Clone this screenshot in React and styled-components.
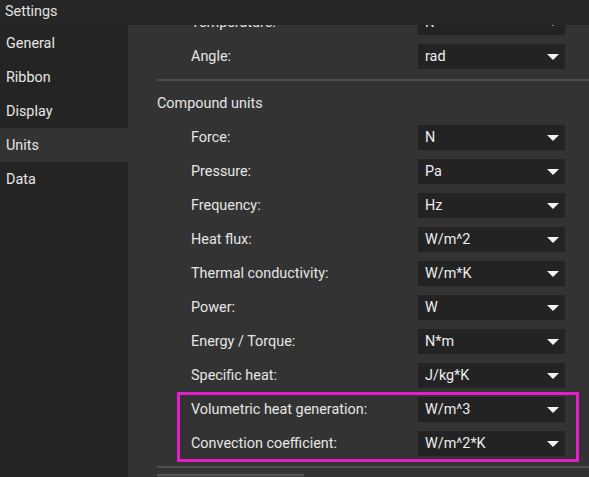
import React from 'react';
import styled, { createGlobalStyle } from 'styled-components';

const GlobalStyle = createGlobalStyle`
    html, body {
        margin:0;
        padding:0;
        background:#333333;
        overflow:hidden;
    }
    body {
        font-family:Roboto, "Liberation Sans", sans-serif;
        font-size:14.4px;
        color:#e6e6e6;
    }
`;

const Window = styled.div`
    width:589px;
    height:477px;
    display:flex;
    flex-direction:column;
    overflow:hidden;
`;

const TitleBar = styled.div`
    height:25px;
    flex:none;
    box-sizing:border-box;
    background:#262626;
    padding:0 0 3px 5px;
    display:flex;
    align-items:center;
    color:#e0e0e0;
`;

const Body = styled.div`
    flex:1;
    display:flex;
    min-height:0;
`;

const Sidebar = styled.nav`
    width:128px;
    flex:none;
    background:#242424;
    padding-top:1px;
`;

const NavItem = styled.div`
    height:34px;
    display:flex;
    align-items:center;
    padding:1px 0 0 6px;
    box-sizing:border-box;
    background:${p => (p.active ? '#333333' : 'transparent')};
    color:#e6e6e6;
`;

const Content = styled.div`
    flex:1;
    background:#333333;
    overflow:hidden;
    padding-left:29px;
`;

const Scroller = styled.div`
    margin-top:-15px;
`;

const UnitGrid = styled.div`
    display:grid;
    row-gap:9px;
    padding-left:34px;
`;

const Row = styled.div`
    display:grid;
    grid-template-columns:227px 147px;
    align-items:center;
    height:25px;
`;

const Label = styled.span`
    color:#e6e6e6;
`;

const Select = styled.div`
    height:25px;
    background:#232323;
    display:flex;
    align-items:center;
    justify-content:space-between;
    padding:0 6px 0 7px;
    box-sizing:border-box;
    color:#eeeeee;
`;

const Caret = styled.span`
    width:0;
    height:0;
    border-left:6px solid transparent;
    border-right:6px solid transparent;
    border-top:6px solid #f2f2f2;
`;

const Divider = styled.div`
    height:2px;
    background:#4e4e4e;
    margin-top:${p => p.top}px;
`;

const SectionTitle = styled.div`
    line-height:17px;
    margin:14px 0 13px;
    color:#e6e6e6;
`;

const Highlight = styled.div`
    margin:4px 10px 4px 20px;
    border:3px solid #e41ec8;
    padding:2px 11px 3px 11px;
    display:grid;
    row-gap:9px;
`;

const FooterButton = styled.div`
    width:147px;
    height:30px;
    margin-top:6px;
    background:#484848;
    border-top:1px solid #5a5a5a;
`;

const UnitRow = ({ label, value }) => (
    <Row>
        <Label>{label}</Label>
        <Select>
            <span>{value}</span>
            <Caret />
        </Select>
    </Row>
);

const baseUnits = [
    ['Temperature:', 'K'],
    ['Angle:', 'rad'],
];

const compoundUnits = [
    ['Force:', 'N'],
    ['Pressure:', 'Pa'],
    ['Frequency:', 'Hz'],
    ['Heat flux:', 'W/m^2'],
    ['Thermal conductivity:', 'W/m*K'],
    ['Power:', 'W'],
    ['Energy / Torque:', 'N*m'],
    ['Specific heat:', 'J/kg*K'],
];

const highlighted = [
    ['Volumetric heat generation:', 'W/m^3'],
    ['Convection coefficient:', 'W/m^2*K'],
];

const nav = ['General', 'Ribbon', 'Display', 'Units', 'Data'];

export default function App() {
    return (
        <>
            <GlobalStyle />
            <Window>
                <TitleBar>Settings</TitleBar>
                <Body>
                    <Sidebar>
                        {nav.map(n => (
                            <NavItem key={n} active={n === 'Units'}>{n}</NavItem>
                        ))}
                    </Sidebar>
                    <Content>
                        <Scroller>
                            <UnitGrid>
                                {baseUnits.map(([l, v]) => <UnitRow key={l} label={l} value={v} />)}
                            </UnitGrid>
                            <Divider top={10} />
                            <SectionTitle>Compound units</SectionTitle>
                            <UnitGrid>
                                {compoundUnits.map(([l, v]) => <UnitRow key={l} label={l} value={v} />)}
                            </UnitGrid>
                            <Highlight>
                                {highlighted.map(([l, v]) => <UnitRow key={l} label={l} value={v} />)}
                            </Highlight>
                            <Divider top={0} />
                            <FooterButton />
                        </Scroller>
                    </Content>
                </Body>
            </Window>
        </>
    );
}
